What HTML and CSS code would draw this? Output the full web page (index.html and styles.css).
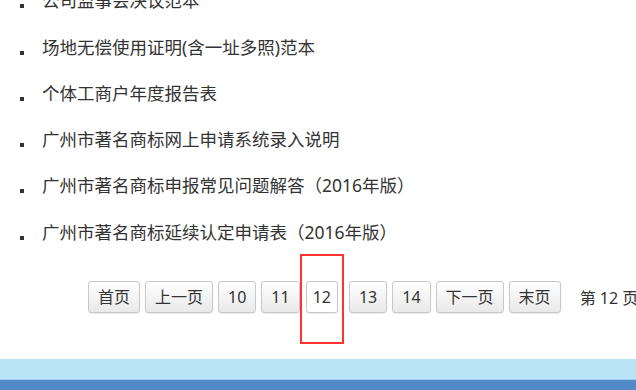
FILE: index.html
```html
<!DOCTYPE html>
<html>
<head>
    <meta charset="utf-8">
    <title>下载中心</title>
    <link rel="stylesheet" href="styles.css">
</head>
<body>
    <div class="main">
        <ul class="doc-list">
            <li><a href="#">公司监事会决议范本</a></li>
            <li><a href="#">场地无偿使用证明(含一址多照)范本</a></li>
            <li><a href="#">个体工商户年度报告表</a></li>
            <li><a href="#">广州市著名商标网上申请系统录入说明</a></li>
            <li><a href="#">广州市著名商标申报常见问题解答（2016年版）</a></li>
            <li><a href="#">广州市著名商标延续认定申请表（2016年版）</a></li>
        </ul>

        <div class="pager">
            <a class="btn" href="#">首页</a>
            <a class="btn" href="#">上一页</a>
            <a class="btn" href="#">10</a>
            <a class="btn" href="#">11</a>
            <span class="btn current">12</span>
            <a class="btn" href="#">13</a>
            <a class="btn" href="#">14</a>
            <a class="btn" href="#">下一页</a>
            <a class="btn" href="#">末页</a>
            <span class="info">第 12 页 / 共 14 页</span>
            <div class="mark"></div>
        </div>
    </div>

    <div class="footer">
        <div class="footer-top"></div>
        <div class="footer-bar"></div>
    </div>
</body>
</html>
```

FILE: styles.css
```css
/* page */
body {
    margin: 0;
    font-family: "Noto Sans", "Noto Sans CJK SC", sans-serif;
    color: #333;
    background-color: #fff;
    overflow: hidden;
}
.main {
    height: 359px;
    overflow: hidden;
}
a {
    color: #333;
    text-decoration: none;
}

/* list */
.doc-list {
    list-style: none;
    margin: -22.6px 0 0 0;
    padding: 0 0 0 20px;
}
.doc-list li {
    position: relative;
    height: 46.25px;
    line-height: 46.25px;
    font-size: 17.5px;
    padding-left: 22px;
    white-space: nowrap;
}
.doc-list li::before {
    content: "";
    position: absolute;
    left: 0;
    top: 27px;
    width: 4px;
    height: 4px;
    background-color: #333;
}

/* pagination */
.pager {
    position: relative;
    display: flex;
    align-items: center;
    margin-top: 26px;
    padding-left: 88px;
    white-space: nowrap;
}
.btn {
    display: inline-block;
    height: 30px;
    line-height: 30px;
    padding: 0 9px;
    margin-right: 5px;
    font-size: 16px;
    color: #333;
    border: 1px solid #c8c8c8;
    border-radius: 3px;
    background: linear-gradient(#fff, #e9e9e9);
    box-shadow: 0 1px 1px rgba(0, 0, 0, 0.08);
}
.btn.current {
    padding: 0 6px;
    margin-left: 1px;
    margin-right: 11px;
    background: #fff;
}
.info {
    margin-left: 14px;
    font-size: 16px;
}
.mark {
    position: absolute;
    left: 300px;
    top: -27px;
    width: 40px;
    height: 86px;
    border: 2px solid #f33;
}

/* footer */
.footer-top {
    height: 20px;
    background-color: #b8e4f6;
    border-bottom: 1px solid #9fcbe8;
}
.footer-bar {
    height: 10px;
    background-color: #528ac7;
}
```
